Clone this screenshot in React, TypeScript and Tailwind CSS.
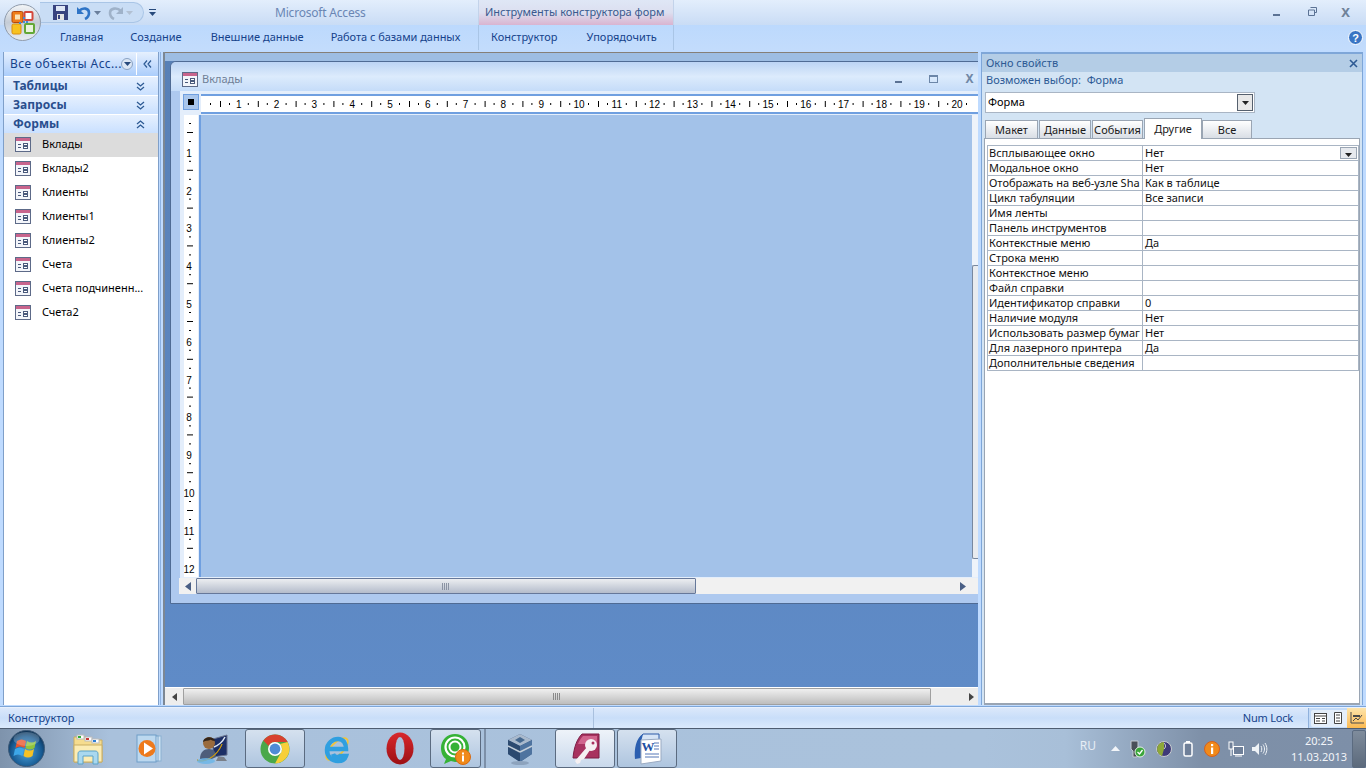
const navItems = ["Вклады", "Вклады2", "Клиенты", "Клиенты1", "Клиенты2", "Счета", "Счета подчиненн...", "Счета2"];

const props = [
  ["Всплывающее окно", "Нет"],
  ["Модальное окно", "Нет"],
  ["Отображать на веб-узле Sha", "Как в таблице"],
  ["Цикл табуляции", "Все записи"],
  ["Имя ленты", ""],
  ["Панель инструментов", ""],
  ["Контекстные меню", "Да"],
  ["Строка меню", ""],
  ["Контекстное меню", ""],
  ["Файл справки", ""],
  ["Идентификатор справки", "0"],
  ["Наличие модуля", "Нет"],
  ["Использовать размер бумаг", "Нет"],
  ["Для лазерного принтера", "Да"],
  ["Дополнительные сведения", ""],
];

function FormIcon() {
  return (
    <svg width="16" height="15" viewBox="0 0 16 15" className="shrink-0">
      <rect x="0.5" y="0.5" width="15" height="14" fill="#f3f5fa" stroke="#5d6a88" />
      <rect x="1" y="1" width="14" height="3" fill="#c8648c" />
      <path d="M3 7.500h3M3 10.500h3" stroke="#4a5a7c" />
      <rect x="8.500" y="6.500" width="4" height="2" fill="#fff" stroke="#4a5a7c" />
      <rect x="8.500" y="9.500" width="4" height="2" fill="#fff" stroke="#4a5a7c" />
    </svg>
  );
}

function Chevrons({ up }: { up?: boolean }) {
  return (
    <svg width="9" height="9" viewBox="0 0 9 9" className={up ? "rotate-180" : ""}>
      <path d="M1 1l3.500 3L8 1M1 5l3.500 3L8 5" fill="none" stroke="#2d5a94" strokeWidth="1.300" />
    </svg>
  );
}

function Grip({ color }: { color: string }) {
  return (
    <svg width="8" height="7" viewBox="0 0 8 7">
      <path d="M.5 0v7M2.500 0v7M4.500 0v7M6.500 0v7" stroke={color} />
    </svg>
  );
}

function HRuler() {
  const cm = Array.from({ length: 21 }, (_, i) => i);
  return (
    <svg width="775" height="16" className="shrink-0">
      {cm.map((n) => (
        <g key={n} fill="#000">
          {n > 0 && (
            <text x={n * 37.8} y="12" fontSize="10" textAnchor="middle" fontFamily="Liberation Sans">
              {n}
            </text>
          )}
          <rect x={n * 37.8 + 9} y="7" width="1" height="2" />
          <rect x={n * 37.8 + 19} y="5" width="1" height="6" />
          <rect x={n * 37.8 + 28} y="7" width="1" height="2" />
        </g>
      ))}
    </svg>
  );
}

function VRuler() {
  const cm = Array.from({ length: 13 }, (_, i) => i);
  return (
    <svg width="15" height="462" className="shrink-0">
      {cm.map((n) => (
        <g key={n} fill="#000">
          {n > 0 && (
            <text x="5" y={n * 37.8 + 4} fontSize="10" textAnchor="middle" fontFamily="Liberation Sans">
              {n}
            </text>
          )}
          {n < 12 && (
            <>
              <rect x="5" y={n * 37.8 + 8} width="2" height="1" />
              <rect x="3" y={n * 37.8 + 17} width="6" height="1" />
              <rect x="5" y={n * 37.8 + 26} width="2" height="1" />
            </>
          )}
        </g>
      ))}
    </svg>
  );
}

function OfficeButton() {
  return (
    <div className="absolute left-[4px] top-[4px] z-10 h-[37px] w-[37px]">
      <svg width="37" height="37" viewBox="0 0 37 37">
        <defs>
          <linearGradient id="orbEdge" x1="0" y1="0" x2="0" y2="1">
            <stop offset="0" stopColor="#f4f6f8" />
            <stop offset="0.5" stopColor="#c4ccd6" />
            <stop offset="1" stopColor="#e8edf2" />
          </linearGradient>
        </defs>
        <circle cx="18.500" cy="18.500" r="18" fill="url(#orbEdge)" stroke="#8f9bab" />
        <rect x="8" y="7.500" width="11" height="11" rx="1.500" fill="#ee7d1a" stroke="#b4470e" />
        <rect x="11" y="10.500" width="5" height="5" fill="#fbe2b8" />
        <rect x="20.500" y="8" width="8" height="8" rx="1" fill="#fff" stroke="#d4483c" strokeWidth="2" />
        <rect x="8" y="20" width="9" height="10" rx="1.500" fill="#f7c21f" stroke="#d98e10" />
        <rect x="21" y="20" width="9" height="9" rx="1" fill="#e9f3dc" stroke="#63a836" strokeWidth="2" />
        <g fill="#3f8fd6">
          <rect x="19" y="17" width="2" height="2" />
          <rect x="15" y="18" width="2" height="2" />
          <rect x="19" y="13" width="2" height="2" />
          <rect x="22" y="17" width="2" height="2" />
        </g>
      </svg>
    </div>
  );
}

function Qat() {
  return (
    <div className="flex h-[21px] w-[104px] items-center gap-[2px] rounded-r-[11px] border border-l-0 border-[#a9c5e6] bg-[#c9ddf5] pl-[13px]">
      <svg width="15" height="15" viewBox="0 0 15 15" className="shrink-0">
        <rect width="15" height="15" fill="#38437f" />
        <rect x="3" y="1" width="9" height="5" fill="#dfe7f5" />
        <rect x="4" y="9" width="7" height="6" fill="#e4e4e4" />
        <rect x="5" y="10" width="2" height="4" fill="#38437f" />
      </svg>
      <svg width="16" height="15" viewBox="0 0 16 15" className="ml-[6px] shrink-0">
        <path d="M3 6c4-4 10-3 10 2 0 3-2 5-4 6" fill="none" stroke="#2f74c6" strokeWidth="2.600" />
        <path d="M1 2v7h7z" fill="#2f74c6" />
      </svg>
      <svg width="7" height="4" viewBox="0 0 7 4" className="shrink-0"><path d="M0 0h7L3.500 4z" fill="#6b7f9c" /></svg>
      <svg width="16" height="15" viewBox="1 0 16 15" className="ml-[4px] shrink-0">
        <path d="M15 6C11 2 4 3 4 8c0 3 2 5 4 6" fill="none" stroke="#9fb2c9" strokeWidth="2.600" />
        <path d="M17 2v7h-7z" fill="#9fb2c9" />
      </svg>
      <svg width="7" height="4" viewBox="0 0 7 4" className="ml-[1px] shrink-0"><path d="M0 0h7L3.500 4z" fill="#b2c0d2" /></svg>
    </div>
  );
}

function TitleBar() {
  return (
    <div className="flex h-[25px] bg-gradient-to-b from-[#e3eefc] to-[#c9dcf5]">
      <div className="flex w-[478px] items-center pl-[40px]">
        <Qat />
        <svg width="7" height="7" viewBox="0 0 7 7" className="ml-[5px]">
          <path d="M0 0h7v1H0zM0 3h7L3.500 7z" fill="#274a7c" />
        </svg>
        <span className="ml-[119px] text-[12px] tracking-[-0.2px] text-[#6a86b4]">Microsoft Access</span>
      </div>
      <div className="flex w-[196px] items-center border-x border-[#c3d3ea] bg-gradient-to-b from-[#dfe7f6] via-[#dcdff0] to-[#d9b4d0] pl-[6px] text-[11px] text-[#3b5a8e]">
        Инструменты конструктора форм
      </div>
      <div className="ml-auto flex items-center">
        <div className="mr-[28px] mt-[4px] h-[2px] w-[7px] bg-[#5b7294]" />
        <svg width="9" height="9" viewBox="0 0 9 9" className="mb-[2px] mr-[24px]">
          <path d="M2.500.5h6v5h-2M.5 3h6v5.500h-6z" fill="none" stroke="#5b7294" />
        </svg>
        <span className="mr-[16px] text-[13px] font-bold leading-none text-[#6f8299]">X</span>
      </div>
    </div>
  );
}

function RibbonTabs() {
  return (
    <div className="flex h-[25px] items-center bg-gradient-to-b from-[#bcd9fd] to-[#c3dcfc] text-[11px] text-[#15428b]">
      <div className="flex w-[478px] items-center whitespace-nowrap pl-[60px]">
        <span>Главная</span>
        <span className="ml-[27px]">Создание</span>
        <span className="ml-[29px]">Внешние данные</span>
        <span className="ml-[27px] tracking-[-0.04px]">Работа с базами данных</span>
      </div>
      <div className="flex h-full w-[196px] items-center border-x border-[#a9c5e6] pl-[12px]">
        <span>Конструктор</span>
        <span className="ml-[29px]">Упорядочить</span>
      </div>
      <svg width="15" height="15" viewBox="0 0 15 15" className="ml-auto mr-[3px]">
        <circle cx="7.500" cy="7.500" r="7" fill="#3a75c4" stroke="#fff" />
        <text x="7.500" y="11.500" fontSize="11" fontWeight="bold" fill="#fff" textAnchor="middle" fontFamily="Liberation Sans">?</text>
      </svg>
    </div>
  );
}

function NavPane() {
  const Section = ({ title, up }: { title: string; up?: boolean }) => (
    <div className={`flex h-[18px] items-center justify-between bg-gradient-to-b from-[#e6f0fe] to-[#c9e0ff] pl-[9px] pr-[13px] text-[12px] font-bold text-[#2a4f8e] ${up ? "" : "mb-px"}`}>
      {title}
      <Chevrons up={up} />
    </div>
  );

  return (
    <div className="ml-[3px] flex w-[156px] shrink-0 flex-col border-x border-[#7f9fc9] bg-white">
      <div className="mb-px flex h-[24px] items-center bg-gradient-to-b from-[#e6f0fe] to-[#abcdfb] pl-[6px] text-[12px] tracking-[0.4px] text-[#15428b]">
        <span className="w-[111px] whitespace-nowrap">Все объекты Acc...</span>
        <span className="flex h-[12px] w-[12px] items-center justify-center rounded-full border border-[#8aa3c4] bg-[#dbe6f4]">
          <svg width="7" height="4" viewBox="0 0 7 4"><path d="M0 0h7L3.500 4z" fill="#274a7c" /></svg>
        </span>
        <div className="ml-[3px] h-[22px] w-px bg-white" />
        <svg width="9" height="8" viewBox="0 0 9 8" className="ml-[6px]">
          <path d="M4 0.500L1 4l3 3.500M8 0.500L5 4l3 3.500" fill="none" stroke="#2d5a94" strokeWidth="1.200" />
        </svg>
      </div>
      <Section title="Таблицы" />
      <Section title="Запросы" />
      <Section title="Формы" up />
      {navItems.map((item, i) => (
        <div key={item} className={`flex h-[24px] items-center pb-[2px] pl-[11px] text-[11px] text-black ${i === 0 ? "bg-[#dcdcdc]" : ""}`}>
          <FormIcon />
          <span className="ml-[11px] whitespace-nowrap">{item}</span>
        </div>
      ))}
    </div>
  );
}

function FormWindow() {
  return (
    <div className="absolute left-[5px] top-[9px] flex h-[543px] w-[820px] flex-col rounded-tl-[6px] border border-[#4f6b94] bg-[#aec9ef]">
      <div className="flex h-[29px] shrink-0 items-center rounded-tl-[5px] bg-gradient-to-b from-[#bcd4f4] via-[#dcebfc] to-[#c5dcf9] pl-[11px] pt-[5px] text-[11px] text-[#6f7f96]">
        <FormIcon />
        <span className="ml-[4px]">Вклады</span>
        <div className="ml-[652px] mt-[5px] h-[2px] w-[7px] shrink-0 bg-[#5b7294]" />
        <div className="ml-[27px] h-[8px] w-[9px] shrink-0 border border-t-2 border-[#6c86a8]" />
        <span className="ml-[28px] text-[12px] font-bold text-[#7088a6]">X</span>
      </div>
      <div className="flex flex-1 flex-col pl-[9px]">
        <div className="flex flex-1 flex-col bg-[#e4eefb] pl-[3px]">
          <div className="flex h-[23px] shrink-0 items-start pt-[3px]">
            <div className="flex h-[16px] w-[16px] shrink-0 items-center justify-center border border-[#6f9fe0] bg-[#a9c6ec]">
              <div className="h-[6px] w-[6px] bg-black" />
            </div>
            <div className="ml-[2px] flex h-[20px] flex-1 overflow-hidden border-y-2 border-[#6f9fe0] bg-white">
              <HRuler />
            </div>
          </div>
          <div className="mt-[1px] flex flex-1">
            <div className="h-[462px] w-[16px] shrink-0 overflow-hidden border-x border-[#e4eefb] bg-white">
              <VRuler />
            </div>
            <div className="w-[2px] shrink-0 bg-[#6f9fe0]" />
            <div className="h-[462px] w-[771px] shrink-0 bg-[#a3c2e9]" />
            <div className="relative h-[462px] w-[7px] shrink-0 bg-[#eef3fa]">
              <div className="absolute left-0 top-[150px] h-[294px] w-full rounded-l-[2px] border border-r-0 border-[#78889f] bg-[#e8ebef]" />
            </div>
          </div>
          <div className="-ml-[4px] mt-[1px] flex h-[16px] shrink-0 items-stretch bg-[#f1f1f1]">
            <div className="flex w-[17px] shrink-0 items-center justify-center">
              <svg width="6" height="9" viewBox="0 0 6 9"><path d="M6 0v9L0 4.500z" fill="#4a5f85" /></svg>
            </div>
            <div className="flex w-[500px] items-center justify-center rounded-[1px] border border-[#66789a] bg-gradient-to-b from-[#eceef1] to-[#b4bccb]">
              <Grip color="#8a93a3" />
            </div>
            <div className="flex flex-1 items-center">
              <svg width="6" height="9" viewBox="0 0 6 9" className="ml-[264px]"><path d="M0 0v9l6-4.500z" fill="#4a5f85" /></svg>
            </div>
          </div>
        </div>
        <div className="h-[9px] shrink-0" />
      </div>
    </div>
  );
}

function MdiArea() {
  return (
    <div className="relative flex flex-1 flex-col overflow-hidden border-l-2 border-[#7c8794]">
      <div className="h-[9px] shrink-0 border-t border-[#857f78] bg-[#9dbde3]" />
      <div className="flex-1 bg-gradient-to-b from-[#5880b6] to-[#5f8bc7]" />
      <div className="flex h-[18px] shrink-0 items-stretch border-t border-white bg-[#ededed]">
        <div className="flex w-[18px] items-center justify-center">
          <svg width="5" height="8" viewBox="0 0 5 8"><path d="M5 0v8L0 4z" fill="#444" /></svg>
        </div>
        <div className="flex w-[748px] items-center justify-center rounded-[1px] border border-[#a0a0a0] bg-gradient-to-b from-[#f0f0f0] to-[#bdbdbd]">
          <Grip color="#8a8a8a" />
        </div>
        <div className="flex flex-1 items-center justify-end pr-[4px]">
          <svg width="5" height="8" viewBox="0 0 5 8"><path d="M0 0v8l5-4z" fill="#444" /></svg>
        </div>
      </div>
      <FormWindow />
    </div>
  );
}

function PropertySheet() {
  const tabs = [
    ["Макет", "w-[53px]"],
    ["Данные", "w-[52px]"],
    ["События", "w-[51px]"],
  ];
  return (
    <div className="ml-[3px] mr-[3px] flex w-[382px] shrink-0 flex-col border-x border-t-2 border-[#7ea6d8] bg-[#d3e4f4] text-[11px]">
      <div className="flex h-[18px] shrink-0 items-center justify-between bg-[#b4cde6] pl-[4px] pr-[4px] text-[11px] leading-[18px] text-[#2d5a94]">
        Окно свойств
        <svg width="9" height="9" viewBox="0 0 9 9"><path d="M1 1l7 7M8 1l-7 7" stroke="#2d5a94" strokeWidth="1.600" /></svg>
      </div>
      <div className="flex h-[15px] shrink-0 items-center pl-[4px] leading-[15px] text-[#2d5a94]">Возможен выбор:&nbsp;&nbsp;Форма</div>
      <div className="ml-[3px] mt-[5px] flex h-[21px] w-[270px] shrink-0 items-center justify-between border border-[#a9b5c4] bg-white pl-[2px] pr-px">
        <span className="text-black">Форма</span>
        <div className="flex h-[17px] w-[16px] items-center justify-center border border-[#55606e] bg-[#e8e8e8]">
          <svg width="7" height="4" viewBox="0 0 7 4"><path d="M0 0h7L3.500 4z" fill="#222" /></svg>
        </div>
      </div>
      <div className="ml-[3px] mt-[5px] flex h-[20px] shrink-0 items-end gap-px">
        {tabs.map(([label, width]) => (
          <div key={label} className={`flex h-[18px] items-center justify-center border border-b-0 border-[#9aa5b3] bg-gradient-to-b from-white to-[#d9dee5] pt-[1px] text-[#1a1a1a] ${width}`}>
            {label}
          </div>
        ))}
        <div className="relative z-10 -mb-px flex h-[21px] w-[58px] items-start justify-center border border-b-0 border-[#9aa5b3] bg-white pt-[2px] text-[#1a1a1a]">Другие</div>
        <div className="-ml-px flex h-[18px] w-[50px] items-center justify-center border border-b-0 border-[#9aa5b3] bg-gradient-to-b from-white to-[#d9dee5] pt-[1px] text-[#1a1a1a]">Все</div>
      </div>
      <div className="ml-[2px] mr-[2px] flex-1 border border-b-2 border-[#9aa5b3] bg-white pl-[2px] pt-[6px]">
        <div className="border-t border-[#a9b5c4]">
          {props.map(([name, value], i) => (
            <div key={name} className="flex h-[15px] border-b border-l border-r border-[#a9b5c4] leading-[14px] text-[#111]">
              <div className="w-[155px] shrink-0 overflow-hidden whitespace-nowrap border-r border-[#a9b5c4] pl-[1px]">{name}</div>
              <div className="relative flex-1 pl-[2px]">
                {value}
                {i === 0 && (
                  <div className="absolute right-[1px] top-[1px] flex h-[12px] w-[17px] items-end justify-center border border-[#9aa5b3] bg-[#e6e9ee] pb-px">
                    <svg width="7" height="4" viewBox="0 0 7 4"><path d="M0 0h7L3.500 4z" fill="#222" /></svg>
                  </div>
                )}
              </div>
            </div>
          ))}
        </div>
      </div>
    </div>
  );
}

function StatusBar() {
  return (
    <div className="flex h-[21px] shrink-0 items-center border-t border-[#e7f0fd] bg-gradient-to-b from-[#dbe8fb] via-[#c9def9] to-[#dbeafd] pl-[8px] text-[11px] text-[#15428b]">
      <span className="w-[585px]">Конструктор</span>
      <div className="h-full w-px bg-[#a9c0de]" />
      <span className="ml-auto mr-[15px] tracking-[-0.2px]">Num Lock</span>
      <div className="flex h-full items-center border-l border-[#8fb1dc] bg-[#c3daf7] pl-[2px]">
        <div className="flex h-[17px] w-[18px] items-center justify-center rounded-l-[2px] bg-[#e4eefa]">
          <svg width="13" height="11" viewBox="0 0 13 11"><rect x="0.500" y="0.500" width="12" height="10" fill="#fff" stroke="#444" /><path d="M0 3h13M2 5.500h4M8 5.500h3M2 8h4M8 8h3" stroke="#444" /></svg>
        </div>
        <div className="flex h-[17px] w-[18px] items-center justify-center bg-[#e4eefa]">
          <svg width="12" height="12" viewBox="0 0 12 12"><path d="M2.500.5h7v11h-7zM4 3h4M4 6h4M4 9h4" fill="#fff" stroke="#444" /></svg>
        </div>
        <div className="flex h-[20px] w-[19px] items-center justify-center bg-gradient-to-b from-[#fde4a9] to-[#fbb94f]">
          <svg width="14" height="12" viewBox="0 0 14 12"><path d="M1 0v11h13M3 9l3-3 2 2 4-5" fill="none" stroke="#4a4a4a" /><path d="M3 4h7" stroke="#4a4a4a" strokeWidth="2" /></svg>
        </div>
      </div>
    </div>
  );
}

function WinOrb() {
  return (
    <svg width="37" height="37" viewBox="0 0 37 37">
      <defs>
        <radialGradient id="winOrb" cx="0.5" cy="0.6" r="0.6">
          <stop offset="0" stopColor="#4aa2dc" />
          <stop offset="0.7" stopColor="#175a92" />
          <stop offset="1" stopColor="#0c2d4e" />
        </radialGradient>
      </defs>
      <circle cx="18.500" cy="18.500" r="18" fill="url(#winOrb)" stroke="#3d5a78" />
      <path d="M9 11c3-2 6-2 9 0l-1.500 7c-3-2-6-2-9 0z" fill="#e8552c" />
      <path d="M19 11c3 2 6 2 9 0l-1.500 7c-3 2-6 2-9 0z" fill="#8fc43c" />
      <path d="M7 19c3-2 6-2 9 0l-1.500 7c-3-2-6-2-9 0z" fill="#3da7e8" />
      <path d="M17 19c3 2 6 2 9 0l-1.500 7c-3 2-6 2-9 0z" fill="#f6c225" />
      <ellipse cx="18.500" cy="9" rx="13" ry="7" fill="#fff" opacity="0.22" />
    </svg>
  );
}

function TaskIcon({ name }: { name: string }) {
  if (name === "explorer") {
    return (
      <svg width="32" height="32" viewBox="0 0 32 32">
        <path d="M2 4h12l2 3h14v22H2z" fill="#f5dc8e" stroke="#c9ad62" />
        <rect x="5" y="2" width="7" height="4" fill="#fff" stroke="#bbb" />
        <rect x="6" y="3" width="3" height="2" fill="#2fae3d" />
        <rect x="13" y="4" width="7" height="4" fill="#fff" stroke="#bbb" />
        <rect x="14" y="5" width="3" height="2" fill="#c83a3a" />
        <rect x="20" y="6" width="7" height="4" fill="#fff" stroke="#bbb" />
        <rect x="21" y="7" width="3" height="2" fill="#2d7fd6" />
        <path d="M2 12h28v17H2z" fill="#fbecb4" stroke="#c9ad62" />
        <path d="M6 31V21c0-2 1-3 3-3h14c2 0 3 1 3 3v10h-5v-8H11v8z" fill="#a9d8ef" stroke="#5ba2c8" />
      </svg>
    );
  }
  if (name === "media") {
    return (
      <svg width="30" height="30" viewBox="0 0 30 30">
        <rect x="8" y="2" width="18" height="25" fill="#cfe3f4" stroke="#8cb2d2" />
        <rect x="5" y="2" width="18" height="25" fill="#d8e9f7" stroke="#7aa6cc" />
        <rect x="2" y="1" width="19" height="27" fill="#bcd8ef" stroke="#6f9ec8" />
        <circle cx="12" cy="14.500" r="8.500" fill="#ee7a1c" />
        <path d="M9 8.500l9 6-9 6z" fill="#fff" />
      </svg>
    );
  }
  if (name === "user") {
    return (
      <svg width="32" height="32" viewBox="0 0 32 32">
        <path d="M17 6l14-4v20l-14 2z" fill="#1c2f66" stroke="#6a7590" />
        <path d="M22 24h6l3 4H20z" fill="#7a7f88" />
        <path d="M18 14c5-2 9-6 11-10" stroke="#dfe8f4" strokeWidth="1.500" fill="none" />
        <circle cx="13" cy="10" r="6" fill="#9a6b3d" />
        <path d="M7 9c1-6 11-6 12-1-3 0-4-2-5-1s-4 0-7 2z" fill="#33251a" />
        <path d="M4 26c0-7 4-10 9-10s7 3 7 8c-5 3-11 4-16 2z" fill="#4d5d7a" />
        <path d="M1 27c6 3 19-2 25-16-4 12-18 20-25 16z" fill="#f0c21e" stroke="#c9980e" />
        <ellipse cx="10" cy="28" rx="9" ry="3" fill="#69b5e8" opacity="0.8" />
      </svg>
    );
  }
  if (name === "chrome") {
    return (
      <svg width="30" height="30" viewBox="0 0 30 30">
        <circle cx="15" cy="15" r="14.500" fill="#4aa84a" />
        <path d="M15 .5A14.500 14.500 0 0 1 27.600 8H15a7 7 0 0 0-6.300 4L3.400 6.500A14.500 14.500 0 0 1 15 .5z" fill="#d8412f" />
        <path d="M27.600 8A14.500 14.500 0 0 1 15 29.500L21 18.500A7 7 0 0 0 20 10z" fill="#f7cf39" />
        <circle cx="15" cy="15" r="7" fill="#fff" />
        <circle cx="15" cy="15" r="5.400" fill="#4f8bd6" />
      </svg>
    );
  }
  if (name === "ie") {
    return (
      <svg width="32" height="32" viewBox="0 0 32 32">
        <ellipse cx="16" cy="16" rx="14" ry="6" fill="none" stroke="#f0c43a" strokeWidth="1.800" transform="rotate(-45 16 16)" />
        <path d="M8 16h17c0-6-3-10-8-10S6 10 6 17s5 11 11 11c4 0 7-2 8-5h-6c-2 2-6 1-7-2" fill="none" stroke="#2f9fe0" strokeWidth="4.500" />
      </svg>
    );
  }
  if (name === "opera") {
    return (
      <svg width="30" height="33" viewBox="0 0 30 33">
        <defs>
          <linearGradient id="operaRed" x1="0" y1="0" x2="0" y2="1">
            <stop offset="0" stopColor="#d8282c" />
            <stop offset="1" stopColor="#9c1014" />
          </linearGradient>
        </defs>
        <ellipse cx="15" cy="16.500" rx="13.500" ry="16" fill="url(#operaRed)" />
        <ellipse cx="15" cy="16.500" rx="4.500" ry="11.500" fill="#a9c1dc" />
      </svg>
    );
  }
  if (name === "agent") {
    return (
      <svg width="32" height="32" viewBox="0 0 32 32">
        <path d="M15 1C7 1 1 7 1 15c0 5 2 9 5 11l-2 5 7-3c1 0 3 1 4 1 8 0 14-6 14-14S23 1 15 1z" fill="#36b236" />
        <circle cx="15" cy="14" r="9.500" fill="none" stroke="#fff" strokeWidth="2.200" />
        <circle cx="15" cy="14" r="5.500" fill="none" stroke="#fff" strokeWidth="2" />
        <circle cx="23" cy="24" r="7.500" fill="#f08a1a" stroke="#d86a10" />
        <rect x="22" y="19.500" width="2" height="2" fill="#fff" />
        <rect x="22" y="22.500" width="2" height="6" fill="#fff" />
      </svg>
    );
  }
  if (name === "vbox") {
    return (
      <svg width="32" height="34" viewBox="0 0 32 34">
        <path d="M16 2l12 6v14l-12 8-12-8V8z" fill="#3f5f88" />
        <path d="M16 2l12 6-12 6L4 8z" fill="#a9b9cc" />
        <path d="M16 5l5 3-5 3-5-3z" fill="#45688f" />
        <path d="M4 8l12 6v16L4 22z" fill="#2c4a70" />
        <path d="M28 8l-12 6v16l12-8z" fill="#4e739f" />
        <path d="M4 14l12 6M28 14l-12 6" stroke="#c3ced9" strokeWidth="1.500" />
        <ellipse cx="16" cy="31" rx="9" ry="2" fill="#8da3bd" />
      </svg>
    );
  }
  if (name === "access") {
    return (
      <svg width="32" height="32" viewBox="0 0 32 32">
        <path d="M13 1h17v24H4C5 14 8 6 13 1z" fill="#a8325f" stroke="#7c1d44" />
        <path d="M14 3h14v8H9c1-3 3-6 5-8z" fill="#d0648c" />
        <circle cx="22" cy="12" r="6" fill="#f5f0f2" />
        <path d="M18 14L6 28l2 3 3-1 1-3 3-1 6-9z" fill="#f5f0f2" />
        <circle cx="24" cy="10" r="1.500" fill="#a8325f" />
      </svg>
    );
  }
  return (
    <svg width="32" height="32" viewBox="0 0 32 32">
      <path d="M12 1h16v8H8c0-3 2-6 4-8z" fill="#d6e4f6" stroke="#2c5aa8" />
      <path d="M12 1C5 5 3 16 4 26l6-1V9z" fill="#2c5fb0" />
      <path d="M10 7l20-1v22l-20 3z" fill="#fff" stroke="#9aaac2" />
      <text x="17" y="18" fontSize="13" fontWeight="bold" fill="#1f4fa2" textAnchor="middle" fontFamily="Liberation Serif">W</text>
      <path d="M23 10h5M23 13h5M23 16h5M14 21h14M14 24h14" stroke="#5477b6" />
    </svg>
  );
}

const taskItems = [
  { name: "explorer", width: "w-[62px]" },
  { name: "media", width: "w-[62px]" },
  { name: "user", width: "w-[62px]" },
  { name: "chrome", width: "ml-[2px] w-[60px]", open: true },
  { name: "ie", width: "w-[64px]" },
  { name: "opera", width: "w-[61px]" },
  { name: "agent", width: "w-[51px]", open: true },
];

function Taskbar() {
  return (
    <div className="flex h-[40px] shrink-0 items-stretch border-t border-[#4e5d72] bg-[linear-gradient(90deg,#7e93ac_0%,#a9c1dc_8%,#aac2dc_72%,#a8bfd8_78%,#7e90a8_88%,#7d8fa8_100%)]">
      <div className="flex w-[57px] shrink-0 items-center pl-[8px]">
        <WinOrb />
      </div>
      {taskItems.map((item) => (
        <div key={item.name} className={`flex shrink-0 items-center justify-center ${item.width} ${item.open ? "rounded-[3px] border border-[#5b6b80] bg-gradient-to-b from-[#d5e1ef] to-[#aec5df]" : ""}`}>
          <TaskIcon name={item.name} />
        </div>
      ))}
      <div className="mx-[3px] w-[2px] shrink-0 border-x border-[#7d90a8]" />
      <div className="flex w-[62px] shrink-0 items-center justify-center">
        <TaskIcon name="vbox" />
      </div>
      <div className="ml-[4px] flex w-[60px] shrink-0 items-center justify-center rounded-[3px] border border-[#5b6b80] bg-gradient-to-b from-[#eef3f9] to-[#c9d9ec]">
        <TaskIcon name="access" />
      </div>
      <div className="ml-[2px] flex w-[60px] shrink-0 items-center justify-center rounded-[3px] border border-[#5b6b80] bg-gradient-to-b from-[#d5e1ef] to-[#aec5df]">
        <TaskIcon name="word" />
      </div>
      <div className="ml-auto flex items-center text-white">
        <span className="mb-[5px] text-[12px] text-[#e6edf5]">RU</span>
        <svg width="9" height="5" viewBox="0 0 9 5" className="ml-[15px]"><path d="M0 5L4.500 0 9 5z" fill="#f2f5f9" /></svg>
        <svg width="18" height="18" viewBox="0 0 18 18" className="ml-[8px]">
          <path d="M3 1h7v8l-1 2v6H5v-6L3 9z" fill="#4a4f58" stroke="#c5cad2" />
          <circle cx="12" cy="12" r="5" fill="#3aa63a" stroke="#e5efe5" />
          <path d="M9.500 12l2 2 3-4" fill="none" stroke="#fff" strokeWidth="1.300" />
        </svg>
        <svg width="16" height="16" viewBox="0 0 16 16" className="ml-[10px]">
          <circle cx="8" cy="8" r="7.500" fill="#3e3a78" stroke="#c8ccd0" />
          <path d="M8 1a7 7 0 0 0-7 7c0 3 2 6 5 7l2-7z" fill="#8ea838" />
          <path d="M8 2c2 2 2 4 0 6" stroke="#e5e5e5" fill="none" />
        </svg>
        <svg width="10" height="16" viewBox="0 0 10 16" className="ml-[11px]">
          <rect x="3" y="0" width="4" height="2" fill="#fff" />
          <rect x="1" y="2" width="8" height="13" rx="1.500" fill="#6f8099" stroke="#fff" strokeWidth="1.500" />
        </svg>
        <svg width="16" height="16" viewBox="0 0 16 16" className="ml-[11px]">
          <circle cx="8" cy="8" r="7.500" fill="#f08a1a" stroke="#d8601a" />
          <rect x="7" y="3" width="2.200" height="2.200" fill="#fff" />
          <rect x="7" y="6.500" width="2.200" height="6.500" fill="#fff" />
        </svg>
        <svg width="16" height="16" viewBox="0 0 16 16" className="ml-[8px]">
          <rect x="5.500" y="5.500" width="10" height="8" fill="#6f8099" stroke="#fff" />
          <rect x="1" y="1" width="4" height="7" fill="#6f8099" stroke="#fff" />
          <path d="M3 8v7M7 15h7" stroke="#fff" />
        </svg>
        <svg width="16" height="14" viewBox="0 0 16 14" className="ml-[8px]">
          <path d="M0 5h3l4-4v12l-4-4H0z" fill="#eef2f6" />
          <path d="M9 4c1 2 1 4 0 6M11 2.500c2 3 2 6 0 9M13 1c2.500 4 2.500 8 0 12" fill="none" stroke="#eef2f6" />
        </svg>
        <div className="ml-[18px] w-[66px] text-center text-[11px] leading-[16px] text-[#f2f5f9]">
          <div>20:25</div>
          <div>11.03.2013</div>
        </div>
        <div className="mt-px h-[38px] w-[14px] rounded-[2px] border border-[#5b6b80] bg-gradient-to-b from-[#7f8c9c] to-[#5c6a7c]" />
      </div>
    </div>
  );
}

export default function App() {
  return (
    <div className="relative flex h-[768px] w-[1366px] flex-col overflow-hidden bg-[#bfdbff] [font-family:'Noto_Sans',sans-serif]">
      <OfficeButton />
      <TitleBar />
      <RibbonTabs />
      <div className="mt-[2px] flex h-[654px] shrink-0 pb-[1px]">
        <NavPane />
        <div className="ml-[1px] mr-[2px] w-[1px] shrink-0 bg-[#8db2e3]" />
        <MdiArea />
        <PropertySheet />
      </div>
      <div className="h-[1px] shrink-0 bg-[#7ea6d8]" />
      <StatusBar />
      <Taskbar />
    </div>
  );
}
